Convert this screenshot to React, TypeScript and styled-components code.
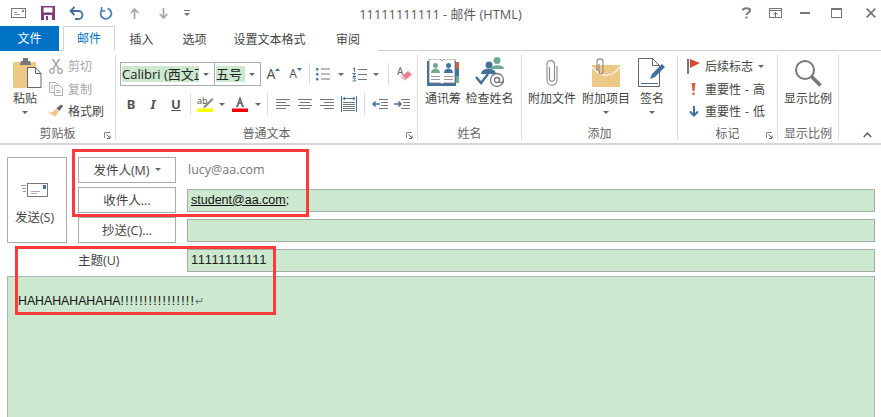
import styled, { createGlobalStyle } from 'styled-components';

const GlobalStyle = createGlobalStyle`
  html, body {
    margin: 0;
    padding: 0;
    width: 881px;
    height: 417px;
    overflow: hidden;
    background: #fff;
  }
  body {
    font-family: 'Open Sans', 'Noto Sans CJK SC', sans-serif;
    font-size: 12px;
    color: #444;
  }
`;

const Window = styled.div`
  position: relative;
  width: 881px;
  height: 417px;
  overflow: hidden;
  background: #fff;
`;

const TitleBar = styled.div`
  display: grid;
  grid-template-columns: 1fr auto 1fr;
  align-items: center;
  height: 26px;
`;

const QuickAccess = styled.div`
  display: flex;
  align-items: center;
  padding-left: 4px;
`;

const QuickSlot = styled.div<{ $w?: number }>`
  width: ${({ $w }) => $w ?? 29}px;
  display: flex;
  justify-content: center;
`;

const TitleText = styled.div`
  font-size: 12.8px;
  color: #5a5a5a;
`;

const WindowControls = styled.div`
  display: flex;
  align-items: center;
  justify-content: flex-end;
  padding-right: 5px;
`;

const WindowButton = styled.div<{ $gap?: number }>`
  display: flex;
  margin-right: ${({ $gap }) => $gap ?? 0}px;
`;

const TabRow = styled.div`
  display: flex;
  height: 25px;
  box-sizing: border-box;
  border-bottom: 1px solid #d2d2d2;
`;

const FileTab = styled.div`
  width: 59px;
  height: 25px;
  box-sizing: border-box;
  padding-bottom: 1px;
  margin-right: 4px;
  background: #0072c6;
  color: #fff;
  font-size: 12px;
  display: flex;
  align-items: center;
  justify-content: center;
`;

const Tab = styled.div<{ $active?: boolean; $w: number }>`
  width: ${({ $w }) => $w}px;
  height: 25px;
  box-sizing: border-box;
  padding-bottom: 1px;
  display: flex;
  align-items: center;
  justify-content: center;
  font-size: 12px;
  color: ${({ $active }) => ($active ? '#0072c6' : '#444')};
  background: #fff;
  border: 1px solid ${({ $active }) => ($active ? '#d2d2d2' : 'transparent')};
  border-bottom: ${({ $active }) => ($active ? '1px solid #fff' : 'none')};
`;

const Ribbon = styled.div`
  position: relative;
  display: flex;
  height: 94px;
  box-sizing: border-box;
  border-bottom: 2px solid #d6d6d6;
  padding: 4px 0 3px;
`;

const Group = styled.div<{ $w: number }>`
  position: relative;
  width: ${({ $w }) => $w}px;
  box-sizing: border-box;
  flex: none;
  display: flex;
  flex-direction: column;
  border-right: 1px solid #dcdcdc;
`;

const GroupBody = styled.div<{ $pad?: number }>`
  flex: 1;
  display: flex;
  padding-left: ${({ $pad }) => $pad ?? 0}px;
`;

const GroupLabel = styled.div`
  height: 16px;
  line-height: 20px;
  text-align: center;
  font-size: 12px;
  color: #666;
`;

const Launcher = styled.svg`
  position: absolute;
  right: 4px;
  bottom: 1px;
`;

const BigButton = styled.div<{ $w: number }>`
  width: ${({ $w }) => $w}px;
  flex: none;
  display: flex;
  flex-direction: column;
  align-items: center;
  font-size: 12px;
  color: #444;
`;

const BigIcon = styled.div`
  height: 35px;
  display: flex;
  align-items: center;
  justify-content: center;
`;

const BigText = styled.div`
  height: 17px;
  line-height: 17px;
  white-space: nowrap;
`;

const Caret = styled.i`
  display: inline-block;
  width: 0;
  height: 0;
  flex: none;
  border-left: 3px solid transparent;
  border-right: 3px solid transparent;
  border-top: 3px solid #666;
`;

const BigCaret = styled(Caret)`
  margin-top: 4px;
`;

const SmallStack = styled.div<{ $shift?: number }>`
  display: flex;
  flex-direction: column;
  margin-left: ${({ $shift }) => $shift ?? 0}px;
`;

const SmallRow = styled.div<{ $off?: boolean }>`
  height: 22.5px;
  display: flex;
  align-items: center;
  gap: 5px;
  white-space: nowrap;
  word-spacing: 1px;
  font-size: 12px;
  color: ${({ $off }) => ($off ? '#a6a6a6' : '#444')};
`;

const SmallIcon = styled.span<{ $w?: number }>`
  width: ${({ $w }) => $w ?? 15}px;
  flex: none;
  display: flex;
  justify-content: center;
`;

const FontArea = styled.div`
  display: flex;
  flex-direction: column;
  padding-top: 7px;
`;

const ToolRow = styled.div<{ $h: number }>`
  display: flex;
  align-items: center;
  height: ${({ $h }) => $h}px;
`;

const Combo = styled.div<{ $w: number }>`
  width: ${({ $w }) => $w}px;
  height: 24px;
  box-sizing: border-box;
  flex: none;
  border: 1px solid #ababab;
  display: flex;
  align-items: center;
  padding: 1px;
  margin-right: -1px;
`;

const ComboValue = styled.div<{ $w: number }>`
  width: ${({ $w }) => $w}px;
  height: 16px;
  line-height: 16px;
  background: #cce8cf;
  color: #222;
  font-size: 13px;
  overflow: hidden;
  white-space: nowrap;
`;

const ComboArrow = styled.div`
  flex: 1;
  display: flex;
  justify-content: center;
`;

const Tool = styled.div<{ $w: number }>`
  width: ${({ $w }) => $w}px;
  flex: none;
  display: flex;
  align-items: center;
  justify-content: center;
`;

const ToolLetter = styled.span<{ $italic?: boolean; $under?: boolean }>`
  font-family: 'Noto Sans', sans-serif;
  font-size: 13px;
  font-weight: 700;
  color: #555;
  font-style: ${({ $italic }) => ($italic ? 'italic' : 'normal')};
  text-decoration: ${({ $under }) => ($under ? 'underline' : 'none')};
`;

const FontStepLetter = styled.span<{ $size: number }>`
  font-family: 'Noto Sans', sans-serif;
  font-size: ${({ $size }) => $size}px;
  line-height: 14px;
  color: #555;
`;

const FontStepMark = styled.svg`
  align-self: flex-start;
  margin-top: 1px;
`;

const ToolDivider = styled.div<{ $mx: number }>`
  width: 1px;
  height: 22px;
  flex: none;
  background: #dcdcdc;
  margin: 0 ${({ $mx }) => $mx}px;
`;

const CollapseIcon = styled.svg`
  position: absolute;
  right: 9px;
  bottom: 5px;
`;

const ComposeArea = styled.div`
  padding: 12px 6px 0 7px;
`;

const HeaderBlock = styled.div`
  display: flex;
  gap: 11px;
`;

const SendButton = styled.div`
  width: 60px;
  height: 86px;
  box-sizing: border-box;
  flex: none;
  border: 1px solid #ababab;
  display: flex;
  flex-direction: column;
  align-items: center;
  color: #444;
  font-size: 12.5px;
  padding: 25px 5px 0 0;
  gap: 9px;
`;

const Fields = styled.div`
  flex: 1;
  display: flex;
  flex-direction: column;
  gap: 4px;
`;

const FieldRow = styled.div`
  display: flex;
  align-items: center;
  gap: 11px;
  height: 26px;
`;

const AddressButton = styled.div`
  width: 98px;
  height: 26px;
  box-sizing: border-box;
  flex: none;
  border: 1px solid #ababab;
  padding-bottom: 2px;
  display: flex;
  align-items: center;
  justify-content: center;
  gap: 5px;
  font-size: 12.5px;
  color: #444;
  background: #fff;
`;

const SubjectLabel = styled.div`
  width: 98px;
  flex: none;
  padding-bottom: 2px;
  font-size: 12.5px;
  color: #444;
`;

const SenderValue = styled.div`
  padding: 0 0 2px 1px;
  font-size: 12.5px;
  color: #777;
`;

const TextField = styled.div`
  flex: 1;
  height: 23px;
  box-sizing: border-box;
  border: 1px solid #a5aba6;
  background: #cce8cf;
  padding-left: 3px;
  line-height: 20px;
  font-family: 'Liberation Sans', sans-serif;
  font-size: 12.5px;
  color: #111;
`;

const Recipient = styled.span`
  text-decoration: underline;
`;

const SubjectValue = styled.span`
  font-size: 13px;
  letter-spacing: 0.55px;
  color: #222;
`;

const Body = styled.div`
  margin-top: 3px;
  height: 160px;
  box-sizing: border-box;
  border: 1px solid #a9b4bd;
  background: #cce8cf;
  padding: 16px 0 0 10px;
  font-family: 'Liberation Sans', sans-serif;
  font-size: 12.3px;
  line-height: 16px;
  color: #111;
`;

const Exclaims = styled.span`
  letter-spacing: 1.25px;
`;

const ParagraphMark = styled.span`
  color: #777;
  font-size: 11px;
`;

const RedBox = styled.div<{ $x: number; $y: number; $w: number; $h: number }>`
  position: absolute;
  left: ${({ $x }) => $x}px;
  top: ${({ $y }) => $y}px;
  width: ${({ $w }) => $w}px;
  height: ${({ $h }) => $h}px;
  box-sizing: border-box;
  border: 3px solid #fb3a3a;
  pointer-events: none;
`;

const EnvelopeIcon = () => (
  <svg width="15" height="11" viewBox="0 0 15 11">
    <rect x="0.5" y="0.5" width="14" height="9" fill="#fff" stroke="#777" />
    <path d="M3 6.5h6M3 4.5h3" stroke="#999" />
    <rect x="11" y="2" width="2" height="2" fill="#888" />
  </svg>
);

const SaveIcon = () => (
  <svg width="14" height="14" viewBox="0 0 14 14">
    <path d="M0 0h14v14H0z" fill="#80397b" />
    <rect x="2.5" y="1.5" width="9" height="5" fill="#fff" />
    <rect x="3" y="9" width="8" height="5" fill="#fff" />
    <rect x="5" y="10" width="2" height="4" fill="#80397b" />
  </svg>
);

const UndoIcon = () => (
  <svg width="15" height="14" viewBox="0 0 15 14" fill="none">
    <path d="M2 5h7.5a4 4 0 0 1 0 8H6" stroke="#41719c" strokeWidth="1.8" />
    <path d="M5.5 1 1.5 5l4 4" stroke="#41719c" strokeWidth="1.8" />
  </svg>
);

const RedoIcon = () => (
  <svg width="14" height="14" viewBox="0 0 14 14" fill="none">
    <path d="M8.5 2.3A5.4 5.4 0 1 1 3.2 3.6" stroke="#4d82b8" strokeWidth="1.8" />
    <path d="M2.5 1v4h4" stroke="#4d82b8" strokeWidth="1.6" />
  </svg>
);

const ArrowIcon = ({ down }: { down?: boolean }) => (
  <svg width="9" height="11" viewBox="0 0 9 11" fill="none">
    <path
      d={down ? 'M4.5 0v10M.8 6l3.7 4 3.7-4' : 'M4.5 11V1M.8 5l3.7-4 3.7 4'}
      stroke="#a6a6a6"
      strokeWidth="1.7"
    />
  </svg>
);

const CustomizeIcon = () => (
  <svg width="6" height="7" viewBox="0 0 6 7">
    <path d="M0 0h6v1H0zM0 3h6L3 6z" fill="#777" />
  </svg>
);

const HelpIcon = () => (
  <svg width="9" height="12" viewBox="0 0 9 12" fill="none">
    <path d="M1 3.5C1 .5 8 .5 8 3.5 8 6 4.5 5.5 4.5 8" stroke="#777" strokeWidth="2" />
    <rect x="3.5" y="9.5" width="2" height="2" fill="#777" />
  </svg>
);

const RibbonDisplayIcon = () => (
  <svg width="13" height="10" viewBox="0 0 13 10" fill="none">
    <rect x="0.5" y="0.5" width="12" height="9" stroke="#777" />
    <path d="M0 2.5h13" stroke="#777" />
    <path d="M6.5 9V4.5M4.5 6.5l2-2 2 2" stroke="#666" />
  </svg>
);

const MinIcon = () => (
  <svg width="10" height="2" viewBox="0 0 10 2">
    <rect width="10" height="2" fill="#777" />
  </svg>
);

const MaxIcon = () => (
  <svg width="11" height="10" viewBox="0 0 11 10" fill="none">
    <rect x="0.5" y="1" width="10" height="8.5" stroke="#777" />
    <rect width="11" height="2" fill="#777" />
  </svg>
);

const CloseIcon = () => (
  <svg width="10" height="10" viewBox="0 0 10 10" fill="none">
    <path d="M.7.7l8.6 8.6M9.3.7.7 9.3" stroke="#777" strokeWidth="1.8" />
  </svg>
);

const PasteIcon = () => (
  <svg width="33" height="30" viewBox="-4 0 33 30">
    <rect x="0" y="4" width="23" height="26" rx="1" fill="#edc987" />
    <path d="M8 3h2V0h5v3h2l1 4H7z" fill="#777" />
    <path d="M14.5 9.5h8l5.500 6v14H14.5z" fill="#fff" stroke="#666" />
    <path d="M22.5 9.5v6H28" fill="none" stroke="#666" />
  </svg>
);

const ScissorsIcon = () => (
  <svg width="14" height="16" viewBox="0 0 14 16" fill="none" stroke="#a8a8a8">
    <circle cx="3" cy="13" r="2.3" strokeWidth="1.3" />
    <circle cx="11" cy="13" r="2.3" strokeWidth="1.3" />
    <path d="M4 11 10.5 1M10 11 3.5 1" strokeWidth="1.5" />
  </svg>
);

const CopyIcon = () => (
  <svg width="14" height="14" viewBox="0 0 14 14" fill="#fff" stroke="#b0b0b0">
    <path d="M.5.5h6l2 2v8h-8z" />
    <path d="M5.5 3.5h5l3 3v7h-8z" />
    <path d="M7.5 8.5h4M7.5 10.5h4M2 4h2M2 6h2" />
  </svg>
);

const BrushIcon = () => (
  <svg width="16" height="14" viewBox="0 0 16 14">
    <path d="M9 4 14 0l2 2-4 5z" fill="#666" />
    <path d="M8.5 4.5 11.5 7.5 8 13 0 8.5l3 .5-1-1.5 3 .5z" fill="#edc987" />
  </svg>
);

const LauncherIcon = () => (
  <Launcher width="7" height="7" viewBox="0 0 7 7" fill="none">
    <path d="M.5 6V.5H6" stroke="#888" />
    <path d="M2.5 2.5 6 6M6 3.5V6.5H3" stroke="#666" />
  </Launcher>
);

const FontStepArrow = ({ up }: { up?: boolean }) => (
  <FontStepMark width="5" height="3" viewBox="0 0 5 3">
    <path d={up ? 'M0 3h5L2.5 0z' : 'M0 0h5L2.5 3z'} fill="#41719c" />
  </FontStepMark>
);

const BulletsIcon = () => (
  <svg width="14" height="14" viewBox="0 0 14 14" fill="none">
    <path d="M5 2h9M5 7h9M5 12h9" stroke="#777" />
    <rect x="0" y="1" width="2.5" height="2.5" rx="1" fill="#41719c" />
    <rect x="0" y="6" width="2.5" height="2.5" rx="1" fill="#41719c" />
    <rect x="0" y="11" width="2.5" height="2.5" rx="1" fill="#41719c" />
  </svg>
);

const NumberingIcon = () => (
  <svg width="15" height="15" viewBox="0 0 15 15" fill="none">
    <path d="M6 2.5h9M6 7.5h9M6 12.5h9" stroke="#777" />
    <path d="M1 1.5 2.5 1v4M.5 6.5h3L1 9.5h3M.5 11h3l-1 1.5 1 1.5h-3" stroke="#41719c" />
  </svg>
);

const EraserIcon = () => (
  <svg width="15" height="16" viewBox="0 0 15 16">
    <text x="0" y="9" fontSize="10" fontFamily="Noto Sans, sans-serif" fill="#666">
      A
    </text>
    <path d="M4 11 11 5l4 3.5-7 6z" fill="#ef7d93" />
    <path d="M4 11l4 3.5 1.5-1.5-4-3.5z" fill="#f4b9c3" />
  </svg>
);

const HighlightIcon = () => (
  <svg width="17" height="16" viewBox="0 0 17 16">
    <text x="0" y="8" fontSize="9" fontFamily="Noto Sans, sans-serif" fill="#555">
      ab
    </text>
    <path d="M7 10 15 2l1.5 1.5-8 8-2.5.5z" fill="#888" />
    <rect x="0" y="12.5" width="16" height="3.5" fill="#ffff00" />
  </svg>
);

const FontColorIcon = () => (
  <svg width="16" height="16" viewBox="0 0 16 16">
    <path d="M8 0 4 11h2l1-3h2l1 3h2z M7.5 6.5 8 4l.5 2.5z" fill="#666" fillRule="evenodd" />
    <rect x="0" y="12.5" width="16" height="3.5" fill="#f00000" />
  </svg>
);

const AlignIcon = ({ kind }: { kind: 'left' | 'center' | 'right' }) => {
  const d = {
    left: 'M0 1.5h14M0 4.5h10M0 7.5h14M0 10.5h10',
    center: 'M0 1.5h14M2 4.5h10M0 7.5h14M2 10.5h10',
    right: 'M0 1.5h14M4 4.5h10M0 7.5h14M4 10.5h10',
  }[kind];
  return (
    <svg width="14" height="12" viewBox="0 0 14 12" fill="none">
      <path d={d} stroke="#777" />
    </svg>
  );
};

const JustifyIcon = () => (
  <svg width="16" height="16" viewBox="0 0 16 16" fill="none">
    <path d="M.5 0v16M15.5 0v16" stroke="#41719c" />
    <path d="M2 2.5h12M4 1 2 2.5 4 4M12 1l2 1.5L12 4" stroke="#41719c" />
    <path d="M2 6.5h12M2 8.5h12M2 10.5h12M2 12.5h12M2 14.5h12" stroke="#777" />
  </svg>
);

const IndentIcon = ({ right }: { right?: boolean }) => (
  <svg width="16" height="12" viewBox="0 0 16 12" fill="none">
    <path d="M7 1.5h9M9 4.5h7M9 7.5h7M7 10.5h9" stroke="#777" />
    <path
      d={right ? 'M0 6h7M4.5 3.5 7 6 4.5 8.5' : 'M1 6h7M3.5 3.5 1 6l2.5 2.5'}
      stroke="#41719c"
      strokeWidth="1.5"
    />
  </svg>
);

const AddressBookIcon = () => (
  <svg width="32" height="27" viewBox="0 0 32 27">
    <rect x="0" y="2" width="29" height="25" fill="#41719c" />
    <rect x="29" y="3" width="3" height="7" fill="#d1633c" />
    <rect x="29" y="10" width="3" height="7" fill="#41719c" />
    <rect x="29" y="17" width="3" height="7" fill="#6fab8f" />
    <path d="M2 0h11l2 2 2-2h11v24H17l-2 1-2-1H2z" fill="#fff" stroke="#777" strokeWidth=".8" />
    <circle cx="8.5" cy="6.5" r="2.5" fill="#6fab8f" />
    <path d="M4 14c0-6 9-6 9 0z" fill="#6fab8f" />
    <circle cx="21.5" cy="6.5" r="2.5" fill="#41719c" />
    <path d="M17 14c0-6 9-6 9 0z" fill="#41719c" />
    <path d="M4 17.5h9M4 20.5h9M17 17.5h9M17 20.5h9" stroke="#999" />
  </svg>
);

const CheckNamesIcon = () => (
  <svg width="31" height="31" viewBox="0 0 31 31" fill="none">
    <circle cx="15" cy="8" r="3.5" fill="#41719c" />
    <path d="M7 17c0-7 15-7 15 0z" fill="#41719c" />
    <circle cx="23" cy="3.5" r="3.5" fill="#6fab8f" />
    <path d="M17 12c0-5 13-5 13 0z" fill="#6fab8f" />
    <path d="M2 20l5 6 7-9" stroke="#41719c" strokeWidth="2.5" />
    <circle cx="23" cy="23" r="6.5" stroke="#777" strokeWidth="1.3" />
    <circle cx="23" cy="23" r="2.5" stroke="#777" strokeWidth="1.3" />
    <path d="M25.5 20.5v4c0 2 3.5 1.5 4-1" stroke="#777" strokeWidth="1.3" />
  </svg>
);

const PaperclipIcon = () => (
  <svg width="12" height="27" viewBox="0 0 12 27" fill="none">
    <path
      d="M3.5 8v12c0 3 5 3 5 0V5C8.5 1 1 0 1 5v16c0 7 10 7 10 0V7"
      stroke="#888"
      strokeWidth="1.1"
    />
  </svg>
);

const AttachItemIcon = () => (
  <svg width="29" height="29" viewBox="0 0 29 29">
    <rect x="0" y="7" width="28" height="22" fill="#edc987" />
    <path d="M0 9c10 12 20 10 28 0" fill="none" stroke="#fff" strokeWidth="1.2" />
    <path d="M5 13V3.5c0-3.5 6-3.5 6 0V13c0 4-4 4-4 0V6" fill="none" stroke="#888" strokeWidth="1.1" />
  </svg>
);

const SignatureIcon = () => (
  <svg width="28" height="29" viewBox="0 0 28 29">
    <path d="M.5.5h14l7 7v21H.5z" fill="#fff" stroke="#666" />
    <path d="M14.5.5v7h7" fill="none" stroke="#666" />
    <path d="M12 21l2-5L24 6l3 3-10 10z" fill="#41719c" />
    <path d="M3 25.5h17" stroke="#41719c" />
  </svg>
);

const FlagIcon = () => (
  <svg width="13" height="15" viewBox="0 0 13 15">
    <rect x="0" y="0" width="2" height="15" fill="#777" />
    <path d="M3 0l10 4-10 5z" fill="#d1502f" />
  </svg>
);

const BangIcon = () => (
  <svg width="5" height="12" viewBox="0 0 5 12">
    <path d="M.5 0h4l-1 8h-2zM1.5 9.5h2V12h-2z" fill="#d1633c" />
  </svg>
);

const DownIcon = () => (
  <svg width="10" height="11" viewBox="0 0 10 11" fill="none">
    <path d="M5 0v9M1 5.5l4 4 4-4" stroke="#41719c" strokeWidth="2" />
  </svg>
);

const ZoomIcon = () => (
  <svg width="28" height="28" viewBox="0 0 28 28" fill="none">
    <circle cx="11" cy="11" r="9" stroke="#777" strokeWidth="2" />
    <path d="M17.5 17.5l9 9" stroke="#777" strokeWidth="3.5" />
  </svg>
);

const SendEnvelopeIcon = () => (
  <svg width="27" height="15" viewBox="0 0 27 15" fill="none">
    <path d="M0 2.5h5M1 5.500h4M2 8.500h3" stroke="#999" />
    <rect x="6.5" y=".5" width="20" height="13" fill="#fff" stroke="#777" />
    <path d="M10 8.500h9M10 10.500h6" stroke="#aaa" />
    <rect x="22" y="2" width="3" height="4" fill="#41719c" />
  </svg>
);

const CollapseRibbon = () => (
  <CollapseIcon width="9" height="6" viewBox="0 0 9 6" fill="none">
    <path d="M.7 5l3.8-3.800L8.300 5" stroke="#666" strokeWidth="1.6" />
  </CollapseIcon>
);

export default function App() {
  return (
    <Window>
      <GlobalStyle />
      <TitleBar>
        <QuickAccess>
          <QuickSlot><EnvelopeIcon /></QuickSlot>
          <QuickSlot><SaveIcon /></QuickSlot>
          <QuickSlot><UndoIcon /></QuickSlot>
          <QuickSlot><RedoIcon /></QuickSlot>
          <QuickSlot><ArrowIcon /></QuickSlot>
          <QuickSlot><ArrowIcon down /></QuickSlot>
          <QuickSlot $w={17}><CustomizeIcon /></QuickSlot>
        </QuickAccess>
        <TitleText>11111111111 - 邮件 (HTML)</TitleText>
        <WindowControls>
          <WindowButton $gap={18}><HelpIcon /></WindowButton>
          <WindowButton $gap={18}><RibbonDisplayIcon /></WindowButton>
          <WindowButton $gap={21}><MinIcon /></WindowButton>
          <WindowButton $gap={24}><MaxIcon /></WindowButton>
          <WindowButton><CloseIcon /></WindowButton>
        </WindowControls>
      </TitleBar>

      <TabRow>
        <FileTab>文件</FileTab>
        <Tab $active $w={52}>邮件</Tab>
        <Tab $w={53}>插入</Tab>
        <Tab $w={53}>选项</Tab>
        <Tab $w={97}>设置文本格式</Tab>
        <Tab $w={60}>审阅</Tab>
      </TabRow>

      <Ribbon>
        <Group $w={116}>
          <GroupBody>
            <BigButton $w={50}>
              <BigIcon>
                <PasteIcon />
              </BigIcon>
              <BigText>粘贴</BigText>
              <BigCaret />
            </BigButton>
            <SmallStack $shift={-2}>
              <SmallRow $off>
                <SmallIcon>
                  <ScissorsIcon />
                </SmallIcon>
                剪切
              </SmallRow>
              <SmallRow $off>
                <SmallIcon>
                  <CopyIcon />
                </SmallIcon>
                复制
              </SmallRow>
              <SmallRow>
                <SmallIcon>
                  <BrushIcon />
                </SmallIcon>
                格式刷
              </SmallRow>
            </SmallStack>
          </GroupBody>
          <GroupLabel>剪贴板</GroupLabel>
          <LauncherIcon />
        </Group>

        <Group $w={302}>
          <GroupBody $pad={4}>
            <FontArea>
              <ToolRow $h={24}>
                <Combo $w={95}>
                  <ComboValue $w={77}>Calibri (西文正文)</ComboValue>
                  <ComboArrow>
                    <Caret />
                  </ComboArrow>
                </Combo>
                <Combo $w={47}>
                  <ComboValue $w={29}>五号</ComboValue>
                  <ComboArrow>
                    <Caret />
                  </ComboArrow>
                </Combo>
                <Tool $w={27}>
                  <FontStepLetter $size={14}>A</FontStepLetter>
                  <FontStepArrow up />
                </Tool>
                <Tool $w={17}>
                  <FontStepLetter $size={12}>A</FontStepLetter>
                  <FontStepArrow />
                </Tool>
                <ToolDivider $mx={5} />
                <Tool $w={16}>
                  <BulletsIcon />
                </Tool>
                <Tool $w={20}>
                  <Caret />
                </Tool>
                <Tool $w={16}>
                  <NumberingIcon />
                </Tool>
                <Tool $w={18}>
                  <Caret />
                </Tool>
                <ToolDivider $mx={3} />
                <Tool $w={24}>
                  <EraserIcon />
                </Tool>
              </ToolRow>
              <ToolRow $h={36}>
                <Tool $w={22}>
                  <ToolLetter>B</ToolLetter>
                </Tool>
                <Tool $w={22}>
                  <ToolLetter $italic>I</ToolLetter>
                </Tool>
                <Tool $w={24}>
                  <ToolLetter $under>U</ToolLetter>
                </Tool>
                <ToolDivider $mx={2} />
                <Tool $w={24}>
                  <HighlightIcon />
                </Tool>
                <Tool $w={10}>
                  <Caret />
                </Tool>
                <Tool $w={26}>
                  <FontColorIcon />
                </Tool>
                <Tool $w={10}>
                  <Caret />
                </Tool>
                <ToolDivider $mx={4} />
                <Tool $w={22}>
                  <AlignIcon kind="left" />
                </Tool>
                <Tool $w={22}>
                  <AlignIcon kind="center" />
                </Tool>
                <Tool $w={22}>
                  <AlignIcon kind="right" />
                </Tool>
                <Tool $w={22}>
                  <JustifyIcon />
                </Tool>
                <ToolDivider $mx={4} />
                <Tool $w={22}>
                  <IndentIcon />
                </Tool>
                <Tool $w={22}>
                  <IndentIcon right />
                </Tool>
              </ToolRow>
            </FontArea>
          </GroupBody>
          <GroupLabel>普通文本</GroupLabel>
          <LauncherIcon />
        </Group>

        <Group $w={104}>
          <GroupBody $pad={2}>
            <BigButton $w={46}>
              <BigIcon>
                <AddressBookIcon />
              </BigIcon>
              <BigText>通讯筹</BigText>
            </BigButton>
            <BigButton $w={47}>
              <BigIcon>
                <CheckNamesIcon />
              </BigIcon>
              <BigText>检查姓名</BigText>
            </BigButton>
          </GroupBody>
          <GroupLabel>姓名</GroupLabel>
        </Group>

        <Group $w={156}>
          <GroupBody $pad={3}>
            <BigButton $w={54}>
              <BigIcon>
                <PaperclipIcon />
              </BigIcon>
              <BigText>附加文件</BigText>
            </BigButton>
            <BigButton $w={54}>
              <BigIcon>
                <AttachItemIcon />
              </BigIcon>
              <BigText>附加项目</BigText>
              <BigCaret />
            </BigButton>
            <BigButton $w={38}>
              <BigIcon>
                <SignatureIcon />
              </BigIcon>
              <BigText>签名</BigText>
              <BigCaret />
            </BigButton>
          </GroupBody>
          <GroupLabel>添加</GroupLabel>
        </Group>

        <Group $w={100}>
          <GroupBody $pad={9}>
            <SmallStack>
              <SmallRow>
                <SmallIcon $w={13}>
                  <FlagIcon />
                </SmallIcon>
                后续标志
                <Caret />
              </SmallRow>
              <SmallRow>
                <SmallIcon $w={13}>
                  <BangIcon />
                </SmallIcon>
                重要性 - 高
              </SmallRow>
              <SmallRow>
                <SmallIcon $w={13}>
                  <DownIcon />
                </SmallIcon>
                重要性 - 低
              </SmallRow>
            </SmallStack>
          </GroupBody>
          <GroupLabel>标记</GroupLabel>
          <LauncherIcon />
        </Group>

        <Group $w={61}>
          <GroupBody>
            <BigButton $w={60}>
              <BigIcon>
                <ZoomIcon />
              </BigIcon>
              <BigText>显示比例</BigText>
            </BigButton>
          </GroupBody>
          <GroupLabel>显示比例</GroupLabel>
        </Group>
        <CollapseRibbon />
      </Ribbon>

      <ComposeArea>
        <HeaderBlock>
          <SendButton>
            <SendEnvelopeIcon />
            发送(S)
          </SendButton>
          <Fields>
            <FieldRow>
              <AddressButton>
                发件人(M)
                <Caret />
              </AddressButton>
              <SenderValue>lucy@aa.com</SenderValue>
            </FieldRow>
            <FieldRow>
              <AddressButton>收件人...</AddressButton>
              <TextField>
                <Recipient>student@aa.com</Recipient>;
              </TextField>
            </FieldRow>
            <FieldRow>
              <AddressButton>抄送(C)...</AddressButton>
              <TextField />
            </FieldRow>
            <FieldRow>
              <SubjectLabel>主题(U)</SubjectLabel>
              <TextField>
                <SubjectValue>11111111111</SubjectValue>
              </TextField>
            </FieldRow>
          </Fields>
        </HeaderBlock>
        <Body>
          HAHAHAHAHAHA<Exclaims>!!!!!!!!!!!!!!!!</Exclaims>
          <ParagraphMark>↵</ParagraphMark>
        </Body>
      </ComposeArea>

      <RedBox $x={72} $y={149} $w={237} $h={68} />
      <RedBox $x={15} $y={246} $w={261} $h={69} />
    </Window>
  );
}
